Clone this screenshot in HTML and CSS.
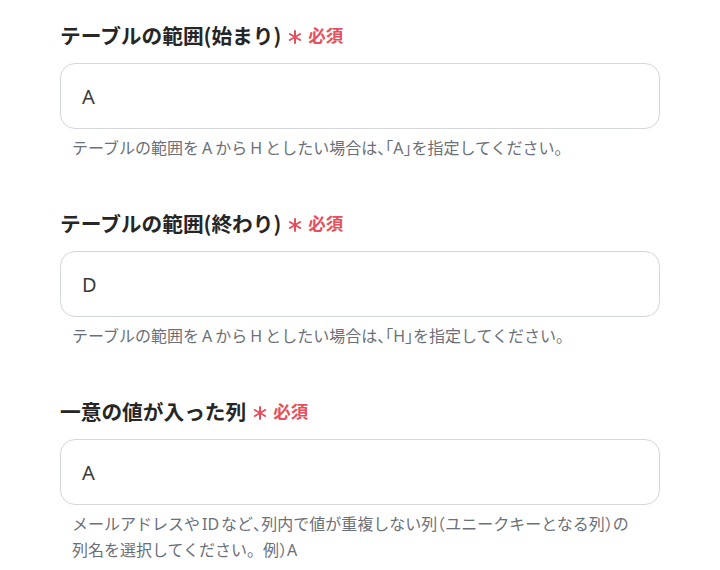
FILE: index.html
```html
<!DOCTYPE html>
<html lang="ja">
<head>
<meta charset="utf-8">
<link rel="stylesheet" href="styles.css">
</head>
<body>
<div class="form">
  <div class="field">
    <div class="label">テーブルの範囲(始まり)<span class="req"><svg class="ast" viewBox="0 0 14 14" width="14" height="14"><g stroke="currentColor" stroke-width="2" stroke-linecap="round"><line x1="7" y1="1" x2="7" y2="13"/><line x1="1.8" y1="4" x2="12.2" y2="10"/><line x1="1.8" y1="10" x2="12.2" y2="4"/></g></svg>必須</span></div>
    <div class="input">A</div>
    <div class="help"><span class="line">テーブルの範囲を<span class="lat">A</span>から<span class="lat">H</span>としたい場合は<span class="p">、「</span>A<span class="p">」</span>を指定してください。</span></div>
  </div>
  <div class="field">
    <div class="label">テーブルの範囲(終わり)<span class="req"><svg class="ast" viewBox="0 0 14 14" width="14" height="14"><g stroke="currentColor" stroke-width="2" stroke-linecap="round"><line x1="7" y1="1" x2="7" y2="13"/><line x1="1.8" y1="4" x2="12.2" y2="10"/><line x1="1.8" y1="10" x2="12.2" y2="4"/></g></svg>必須</span></div>
    <div class="input">D</div>
    <div class="help"><span class="line">テーブルの範囲を<span class="lat">A</span>から<span class="lat">H</span>としたい場合は<span class="p">、「</span>H<span class="p">」</span>を指定してください。</span></div>
  </div>
  <div class="field">
    <div class="label">一意の値が入った列<span class="req"><svg class="ast" viewBox="0 0 14 14" width="14" height="14"><g stroke="currentColor" stroke-width="2" stroke-linecap="round"><line x1="7" y1="1" x2="7" y2="13"/><line x1="1.8" y1="4" x2="12.2" y2="10"/><line x1="1.8" y1="10" x2="12.2" y2="4"/></g></svg>必須</span></div>
    <div class="input">A</div>
    <div class="help"><span class="line">メールアドレスやIDなど<span class="p">、</span>列内で値が重複しない列<span class="p">（</span>ユニークキーとなる列<span class="p">）</span>の</span><span class="line">列名を選択してください。例<span class="p">）</span>A</span></div>
  </div>
</div>
</body>
</html>
```
FILE: styles.css
```css
html, body {
  margin: 0;
  padding: 0;
  background: #ffffff;
}
body {
  font-family: "Noto Sans CJK JP", "Noto Sans", sans-serif;
  color: #2a2a2a;
}
.form {
  padding: 20px 60px 0 60px;
  display: flex;
  flex-direction: column;
  gap: 48px;
}
.field {
  display: flex;
  flex-direction: column;
}
.label {
  font-size: 20.7px;
  font-weight: 700;
  line-height: 30px;
  height: 30px;
  display: flex;
  align-items: center;
  color: #262626;
}
.req {
  display: inline-flex;
  align-items: center;
  color: #e5505c;
  font-size: 17.5px;
  font-weight: 700;
  margin-left: 7px;
}
.ast {
  margin-right: 6px;
  margin-top: 4px;
}
.input {
  margin-top: 13px;
  height: 66px;
  box-sizing: border-box;
  border: 1px solid #d3d6db;
  border-radius: 15px;
  padding-left: 21px;
  display: flex;
  align-items: center;
  font-size: 20px;
  color: #3a3a3a;
  font-family: "Noto Sans", "Noto Sans CJK JP", sans-serif;
}
.help {
  margin-top: 5px;
  padding-left: 12px;
  font-family: "Noto Sans", "Noto Sans CJK JP", sans-serif;
  font-size: 16px;
  line-height: 26px;
  color: #6b6f78;
  text-autospace: normal;
  display: flex;
  flex-direction: column;
}
.line {
  display: block;
  height: 26px;
  overflow: visible;
  white-space: nowrap;
}
.lat {
  margin: 0 1px;
}
.p {
  font-family: "Noto Sans CJK JP", sans-serif;
  font-feature-settings: "halt";
}
```
